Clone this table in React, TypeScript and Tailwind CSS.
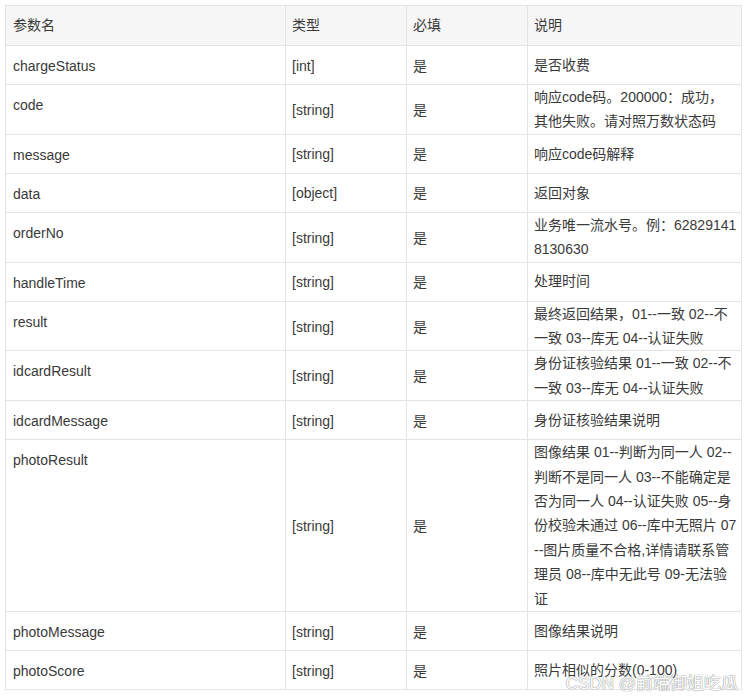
const font = "font-['Liberation_Sans','Noto_Sans_CJK_SC',sans-serif]";

type Row = { name: string; type: string; req: string; desc: string[] };

const rows: Row[] = [
  { name: 'chargeStatus', type: '[int]', req: '是', desc: ['是否收费'] },
  { name: 'code', type: '[string]', req: '是', desc: ['响应code码。200000：成功，', '其他失败。请对照万数状态码'] },
  { name: 'message', type: '[string]', req: '是', desc: ['响应code码解释'] },
  { name: 'data', type: '[object]', req: '是', desc: ['返回对象'] },
  { name: 'orderNo', type: '[string]', req: '是', desc: ['业务唯一流水号。例：62829141', '8130630'] },
  { name: 'handleTime', type: '[string]', req: '是', desc: ['处理时间'] },
  { name: 'result', type: '[string]', req: '是', desc: ['最终返回结果，01--一致 02--不', '一致 03--库无 04--认证失败'] },
  { name: 'idcardResult', type: '[string]', req: '是', desc: ['身份证核验结果 01--一致 02--不', '一致 03--库无 04--认证失败'] },
  { name: 'idcardMessage', type: '[string]', req: '是', desc: ['身份证核验结果说明'] },
  {
    name: 'photoResult',
    type: '[string]',
    req: '是',
    desc: [
      '图像结果 01--判断为同一人 02--',
      '判断不是同一人 03--不能确定是',
      '否为同一人 04--认证失败 05--身',
      '份校验未通过 06--库中无照片 07',
      '--图片质量不合格,详情请联系管',
      '理员 08--库中无此号 09-无法验',
      '证',
    ],
  },
  { name: 'photoMessage', type: '[string]', req: '是', desc: ['图像结果说明'] },
  { name: 'photoScore', type: '[string]', req: '是', desc: ['照片相似的分数(0-100)'] },
];

const cols = 'grid grid-cols-[280px_121px_121px_214px]';
const cell = 'border-r border-b border-[#e4e4e4]';

export default function App() {
  return (
    <div className={`min-h-[697px] bg-white p-[5px] text-[14px] text-[#3a3a3a] ${font}`}>
      <div className="relative w-[737px] border-l border-t border-[#e4e4e4]">
        <div className={`${cols} h-[40px] bg-[#f6f6f6]`}>
          <div className={`${cell} flex items-center pl-[7px]`}>参数名</div>
          <div className={`${cell} flex items-center pl-[6px]`}>类型</div>
          <div className={`${cell} flex items-center pl-[6px]`}>必填</div>
          <div className={`${cell} flex items-center pl-[6px]`}>说明</div>
        </div>

        {rows.map((r) => (
          <div key={r.name} className={`${cols} min-h-[39px]`}>
            <div className={`${cell} pl-[7px] pt-[8px] leading-[24px]`}>{r.name}</div>
            <div className={`${cell} flex items-center pl-[6px] pt-[2px]`}>{r.type}</div>
            <div className={`${cell} flex items-center pl-[6px] pt-[2px]`}>{r.req}</div>
            <div className={`${cell} flex flex-col justify-center pl-[6px] leading-[24.4px] whitespace-nowrap`}>
              {r.desc.map((line, i) => (
                <span key={i}>{line}</span>
              ))}
            </div>
          </div>
        ))}

        <div className="pointer-events-none absolute bottom-[-6px] right-[4px] text-[17px] text-white [text-shadow:0_0_1px_#8a8a8a,0_0_1px_#8a8a8a]">
          CSDN @前端御姐吃瓜
        </div>
      </div>
    </div>
  );
}
